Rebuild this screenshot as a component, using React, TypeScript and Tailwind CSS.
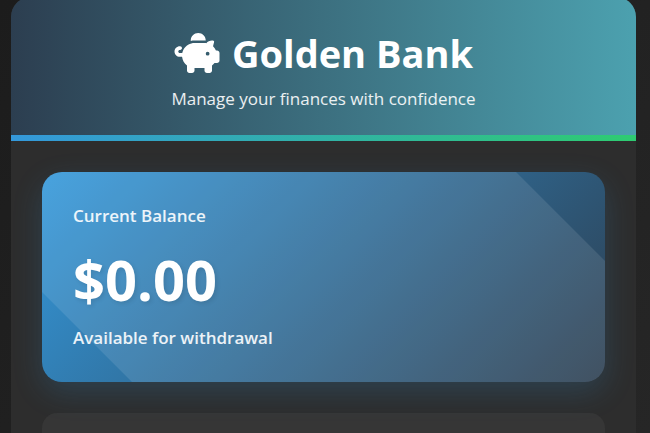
import { FaPiggyBank } from 'react-icons/fa6';

const FONT = "font-['Open_Sans','Noto_Sans',sans-serif]";

function formatMoney(n: number) {
  return n.toLocaleString('en-US', { style: 'currency', currency: 'USD' });
}

function Header() {
  return (
    <header className="bg-linear-to-r/srgb from-[#2c3e50] to-[#4ca1af] text-center text-white">
      <div className="px-8 pt-[30px] pb-[22px]">
        <h1 className="flex items-center justify-center gap-3 text-[38px] leading-[52px] font-bold">
          <FaPiggyBank className="h-10 w-[46px]" aria-hidden="true" />
          Golden Bank
        </h1>
        <p className="pt-1.5 text-[17px] leading-7 text-white/90">Manage your finances with confidence</p>
      </div>
      <div className="h-1.5 bg-linear-to-r/srgb from-[#3498db] to-[#2ecc71]" />
    </header>
  );
}

function BalanceCard({ balance }: { balance: number }) {
  return (
    <section className="relative overflow-hidden rounded-[20px] bg-linear-[135deg] from-[#3498db] to-[#2c3e50] px-[31px] py-7 text-white shadow-[0_10px_30px_rgba(52,152,219,0.2)]">
      {/* diagonal sheen */}
      <div className="absolute -inset-x-1/2 -top-1/2 h-[200%] rotate-45 bg-white/10" />
      <div className="relative">
        <h2 className="text-[17px] leading-8 font-semibold text-white/90">Current Balance</h2>
        <p className="text-[56px] leading-[94px] font-bold [text-shadow:2px_2px_4px_rgba(0,0,0,0.1)]">{formatMoney(balance)}</p>
        <p className="pb-1 text-[17px] leading-6 font-semibold text-white/90">Available for withdrawal</p>
      </div>
    </section>
  );
}

export default function App() {
  return (
    <div className={`flex h-screen flex-col overflow-hidden bg-linear-[135deg] from-[#1c1c1c] to-[#262626] pr-[14px] pl-[11px] ${FONT}`}>
      <main className="-mt-[3px] flex flex-1 flex-col overflow-hidden rounded-t-[20px] bg-[#2d2d2d]">
        <Header />
        <div className="flex flex-1 flex-col gap-[31px] px-[31px] pt-[31px]">
          <BalanceCard balance={0} />
          <section className="flex-1 rounded-t-[15px] bg-[#363636]" />
        </div>
      </main>
    </div>
  );
}
